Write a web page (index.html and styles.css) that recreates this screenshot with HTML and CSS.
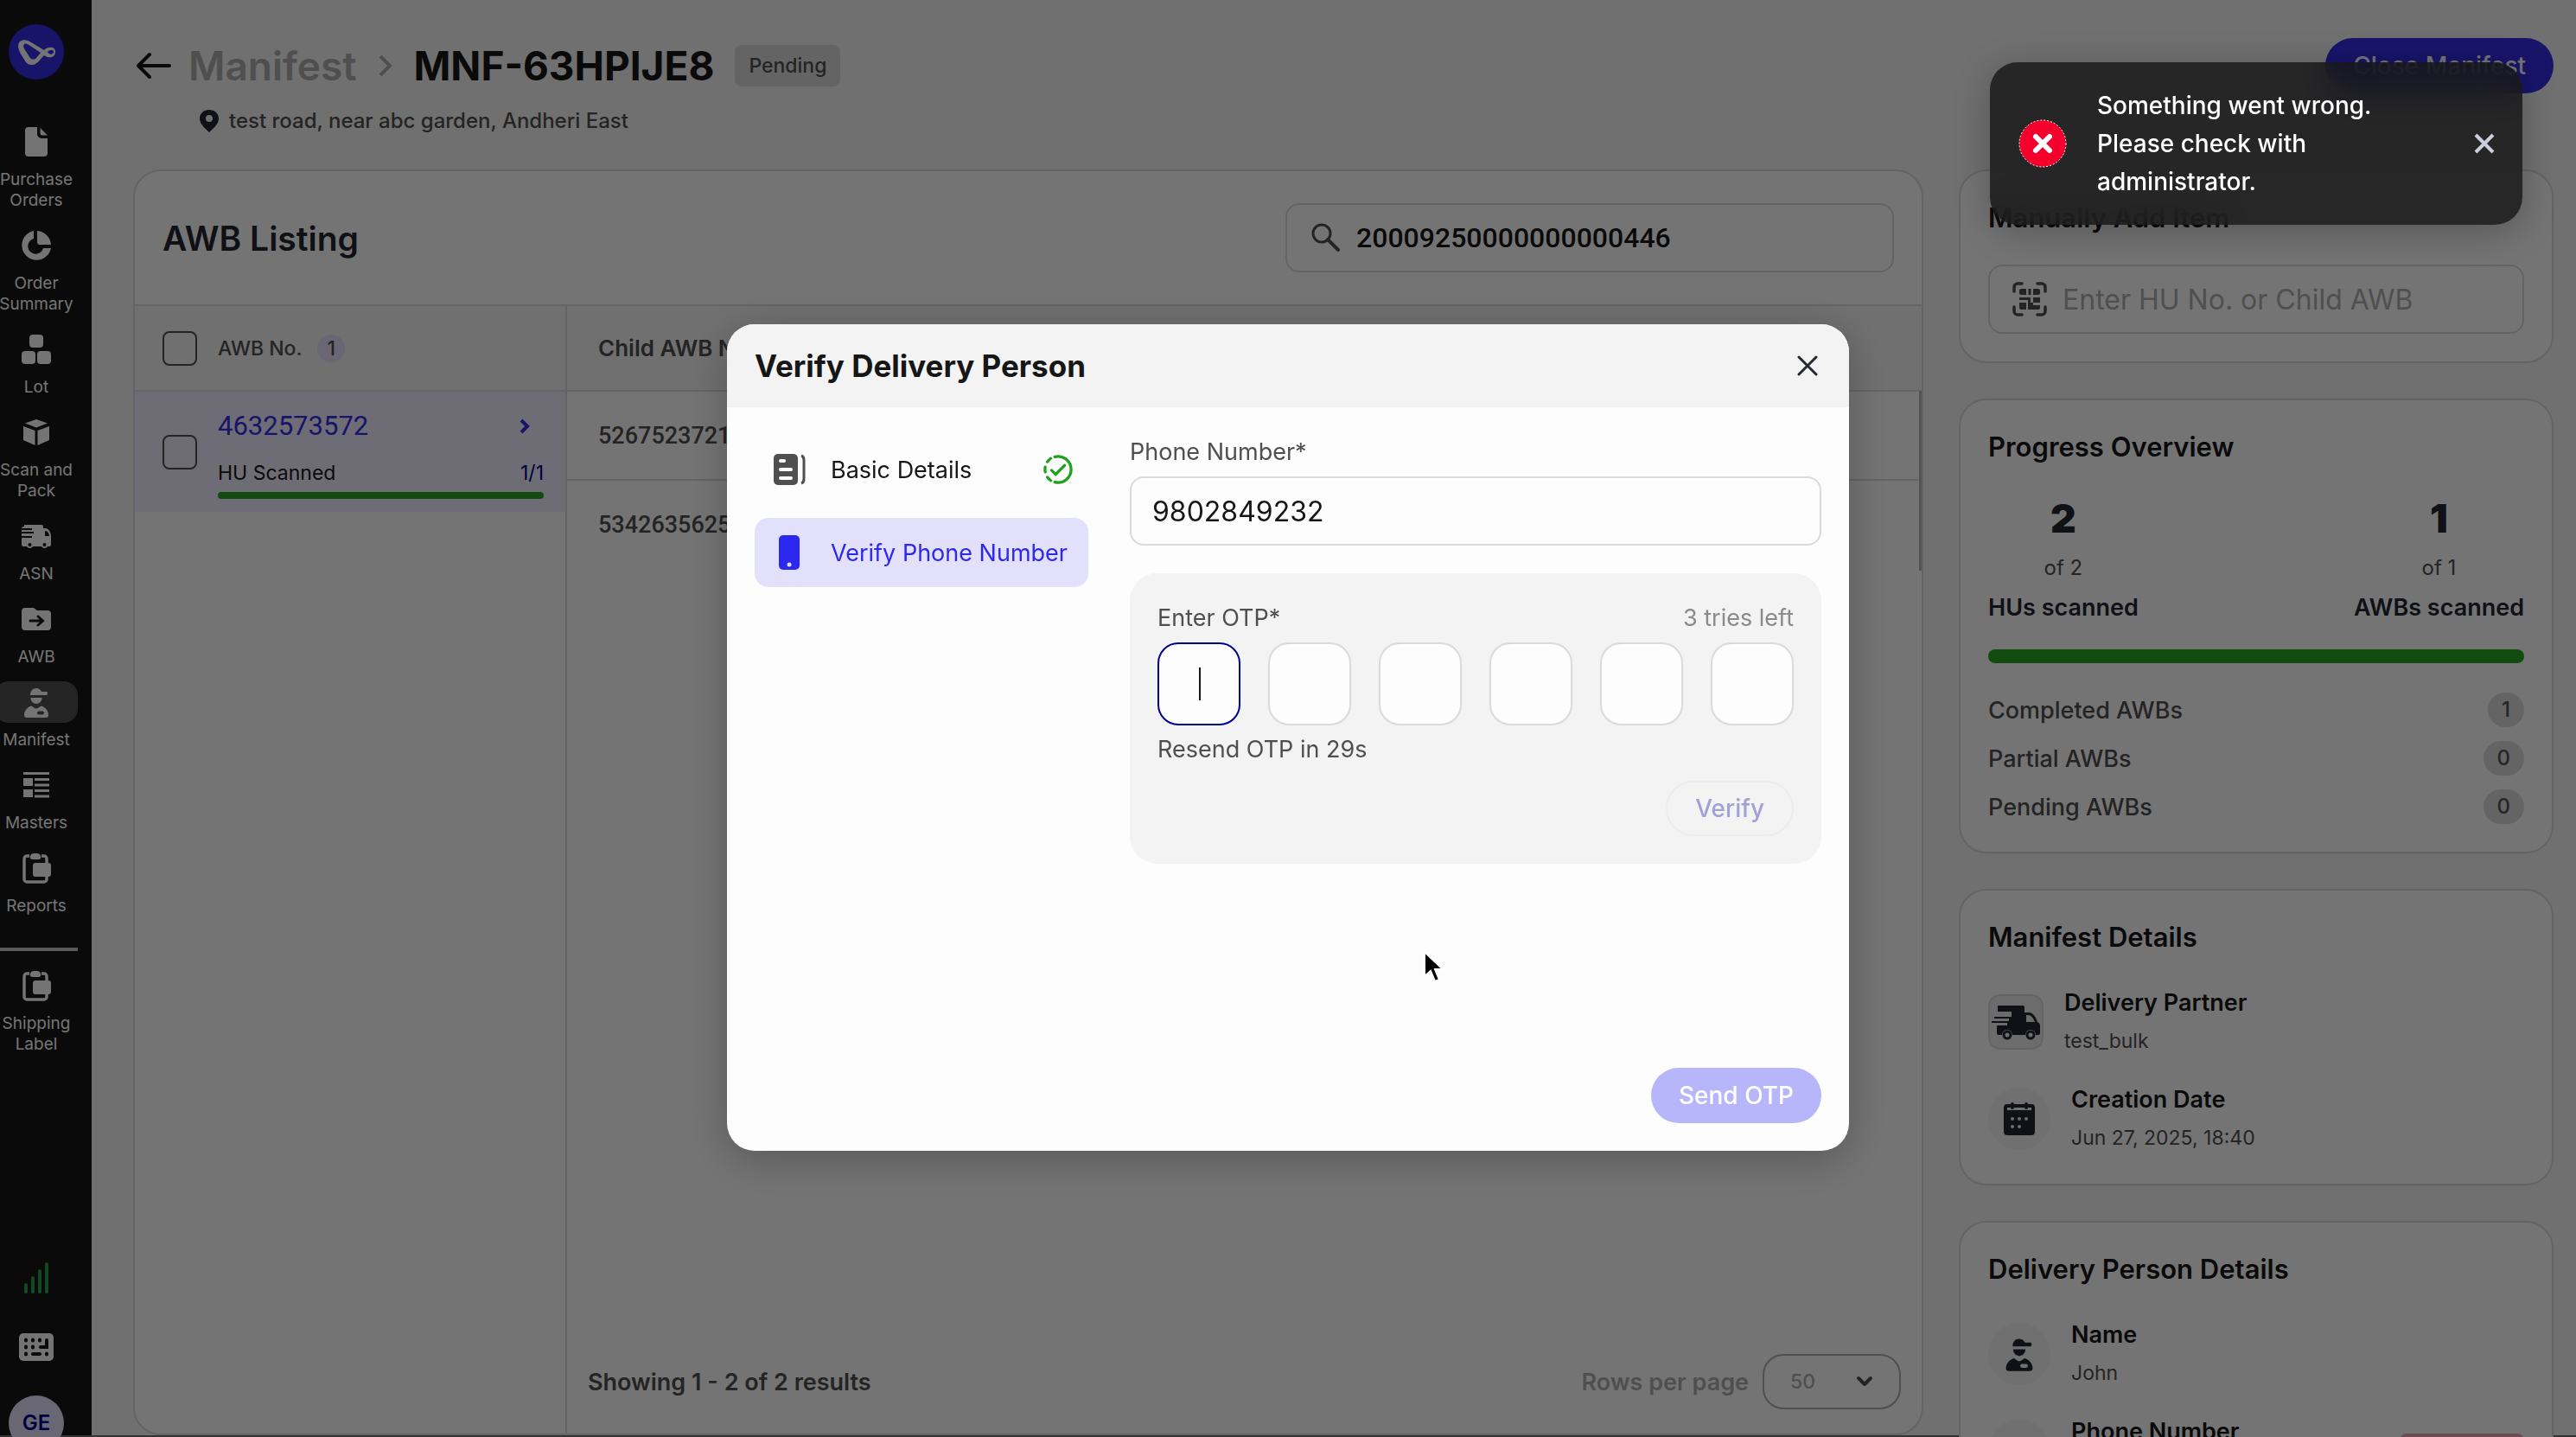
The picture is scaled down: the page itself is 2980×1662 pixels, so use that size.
FILE: index.html
```html
<!DOCTYPE html>
<html lang="en">
<head>
    <meta charset="UTF-8">
    <meta name="viewport" content="width=device-width, initial-scale=1.0">
    <title>Manifest MNF-63HPIJE8</title>
    <link rel="stylesheet" href="styles.css">
</head>
<body>
    <svg class="sprite" width="0" height="0" aria-hidden="true">
        <symbol id="i-rider" viewBox="0 0 40 40">
            <path d="M13 12c0-5 3-8 7-8 3 0 5 2 6 4h6c1.300 0 1.300 4 0 4zM13.500 15h13c0 4-3 7-6.500 7s-6.500-3-6.500-7z"/>
            <path fill-rule="evenodd" d="M14 24.500c2 0 3 3 6 3s4-3 6-3c5 2 8 6 8 10.500 0 2-1 3-3 3H9c-2 0-3-1-3-3 0-4.500 3-8.500 8-10.500zM23 30.500a2 2 0 0 0 0 4h4a2 2 0 0 0 0-4z"/>
        </symbol>
        <symbol id="i-report" viewBox="0 0 40 40">
            <path d="M12 6H9a3 3 0 0 0-3 3v24a3 3 0 0 0 3 3h20a3 3 0 0 0 3-3V9a3 3 0 0 0-3-3h-3" fill="none" stroke="currentColor" stroke-width="3.500"/>
            <path d="M13 6c1-3 3-3 6-3s5 0 6 3-1 4-3 4h-6c-2 0-4-1-3-4zM19 14h15a3 3 0 0 1 3 3v10a3 3 0 0 1-3 3H19a3 3 0 0 1-3-3V17a3 3 0 0 1 3-3z"/>
        </symbol>
    </svg>

    <div class="app">
        <aside class="sidebar">
            <a href="#" class="logo" aria-label="Home">
                <svg viewBox="0 0 64 64"><circle cx="32" cy="32" r="32" fill="#352de6"/><path fill-rule="evenodd" fill="#fdfdfd" d="M13 20c4-3 9-2 13 1l15 9c4-4 13-5 13 2s-8 8-13 4c-5 5-8 11-14 11-7 0-8-5-12-11-3-5-6-12-2-16zm5 3c-3 3 3 9 5 13 2 5 6 6 9 3l5-6-12-8c-3-2-5-3-7-2zm27 9c2 4 7 3 7 0s-4-3-7 0z"/></svg>
            </a>
            <nav class="nav">
                <a href="#" class="nav-item">
                    <span class="nav-icon"><svg viewBox="0 0 40 40"><path d="M11 3h10v8a5 5 0 0 0 5 5h7v17a4 4 0 0 1-4 4H11a4 4 0 0 1-4-4V7a4 4 0 0 1 4-4zM24.500 4l8.500 8.500h-6a2.500 2.500 0 0 1-2.500-2.500z"/></svg></span>
                    <span>Purchase Orders</span>
                </a>
                <a href="#" class="nav-item">
                    <span class="nav-icon"><svg viewBox="0 0 40 40"><path d="M17 3v9a9 9 0 1 0 11 11h9A17 17 0 1 1 17 3zM21 3a17 17 0 0 1 16 16H24a3 3 0 0 1-3-3z"/></svg></span>
                    <span>Order Summary</span>
                </a>
                <a href="#" class="nav-item">
                    <span class="nav-icon"><svg viewBox="0 0 40 40"><rect x="12" y="3" width="16" height="15" rx="4"/><rect x="3" y="22" width="16" height="15" rx="4"/><rect x="21" y="22" width="16" height="15" rx="4"/></svg></span>
                    <span>Lot</span>
                </a>
                <a href="#" class="nav-item">
                    <span class="nav-icon"><svg viewBox="0 0 40 40"><path d="M20 5l13 4.500-13 5L7 9.500zM5 13l13.500 5v17L5 29zM35 13l-13.500 5v17L35 29z"/></svg></span>
                    <span>Scan and Pack</span>
                </a>
                <a href="#" class="nav-item">
                    <span class="nav-icon"><svg viewBox="0 0 40 40"><path fill-rule="evenodd" d="M6 7h20a2 2 0 0 1 2 2v2h3c4 1 6 5 6 10v9a2 2 0 0 1-2 2h-2a4 4 0 0 1-7 0h-10a4 4 0 0 1-7 0H5a2 2 0 0 1-2-2v-8h12v-2H3v-3h14v-2H3v-2h12v-2H3c0-1 1-2 3-2zm24 7v6h5c0-3-2-6-5-6zM12.500 28a2 2 0 1 0 0 4 2 2 0 0 0 0-4zm17 0a2 2 0 1 0 0 4 2 2 0 0 0 0-4z"/></svg></span>
                    <span>ASN</span>
                </a>
                <a href="#" class="nav-item">
                    <span class="nav-icon"><svg viewBox="0 0 40 40"><path d="M7 7h10l4 3h12a4 4 0 0 1 4 4v15a4 4 0 0 1-4 4H7a4 4 0 0 1-4-4V11a4 4 0 0 1 4-4z"/><path d="M13 22h14M22 17l5.500 5-5.500 5" fill="none" stroke="#161616" stroke-width="3" stroke-linecap="round"/></svg></span>
                    <span>AWB</span>
                </a>
                <a href="#" class="nav-item active">
                    <span class="nav-icon"><svg><use href="#i-rider"/></svg></span>
                    <span>Manifest</span>
                </a>
                <a href="#" class="nav-item">
                    <span class="nav-icon"><svg viewBox="0 0 40 40"><path d="M5 5h30v3H5zM5 12h11v9H5zM5 25h11v9H5zM18 12h17v3H18zM18 18.500h17v3H18zM18 25h17v3H18zM18 31.500h17v3H18z"/></svg></span>
                    <span>Masters</span>
                </a>
                <a href="#" class="nav-item">
                    <span class="nav-icon"><svg><use href="#i-report"/></svg></span>
                    <span>Reports</span>
                </a>
                <hr class="nav-divider">
                <a href="#" class="nav-item">
                    <span class="nav-icon"><svg><use href="#i-report"/></svg></span>
                    <span>Shipping Label</span>
                </a>
            </nav>
            <div class="sidebar-foot">
                <svg class="signal" viewBox="0 0 28 36"><path d="M2 26v8M10 18v16M18 10v24M26 2v32" stroke="#2a9d50" stroke-width="4" stroke-linecap="round"/></svg>
                <svg class="keyboard" viewBox="0 0 40 32"><rect width="40" height="32" rx="5"/><path d="M8 7.500v1M16 7.500v1M24 7.500v1M8 15.500v1M16 15.500v1M8 23.500v1M32 23.500v1M32 8v8h-7M16 24h8" fill="none" stroke="#161616" stroke-width="4" stroke-linecap="round"/></svg>
                <span class="avatar">GE</span>
            </div>
        </aside>

        <main class="page">
            <header class="page-head">
                <div>
                    <div class="crumbs">
                        <a href="#" class="back" aria-label="Back"><svg viewBox="0 0 40 32"><path d="M38 16H3M15 3L2 16l13 13" fill="none" stroke="#161616" stroke-width="4" stroke-linecap="round" stroke-linejoin="round"/></svg></a>
                        <a href="#" class="crumb">Manifest</a>
                        <svg class="crumb-sep" viewBox="0 0 18 28"><path d="M3 3l11 11L3 25" fill="none" stroke="#adadad" stroke-width="4"/></svg>
                        <h1>MNF-63HPIJE8</h1>
                        <span class="status">Pending</span>
                    </div>
                    <p class="address">
                        <svg viewBox="0 0 22 26"><path fill-rule="evenodd" d="M11 0c6 0 11 4 11 10 0 7-7 12-11 16C7 22 0 17 0 10 0 4 5 0 11 0zm0 6a4 4 0 1 0 0 8 4 4 0 0 0 0-8z"/></svg>
                        test road, near abc garden, Andheri East
                    </p>
                </div>
                <button type="button" class="btn btn-primary">Close Manifest</button>
            </header>

            <div class="columns">
                <section class="card listing">
                    <div class="listing-head">
                        <h2>AWB Listing</h2>
                        <label class="field search">
                            <svg viewBox="0 0 36 36"><circle cx="14" cy="13" r="10" fill="none" stroke="#4f4f4f" stroke-width="3"/><path d="M21 20l12 12" stroke="#4f4f4f" stroke-width="4" stroke-linecap="round"/></svg>
                            <input type="text" aria-label="Search AWB" value="20009250000000000446">
                        </label>
                    </div>
                    <div class="listing-body">
                        <table class="awb-table">
                            <thead>
                                <tr>
                                    <th class="check-cell"><input type="checkbox" aria-label="Select all"></th>
                                    <th>AWB No. <span class="count">1</span></th>
                                </tr>
                            </thead>
                            <tbody>
                                <tr>
                                    <td class="check-cell"><input type="checkbox" aria-label="Select 4632573572"></td>
                                    <td>
                                        <a href="#" class="awb-link">4632573572
                                            <svg viewBox="0 0 12 18"><path d="M2 2l7 7-7 7" fill="none" stroke="#352de6" stroke-width="4"/></svg>
                                        </a>
                                        <div class="awb-scan"><span>HU Scanned</span><span class="ratio">1/1</span></div>
                                        <div class="bar bar-thin"></div>
                                    </td>
                                </tr>
                            </tbody>
                        </table>
                        <div class="children">
                            <table class="child-table">
                                <thead><tr><th>Child AWB No.</th></tr></thead>
                                <tbody>
                                    <tr><td>5267523721</td></tr>
                                    <tr><td>5342635625</td></tr>
                                </tbody>
                            </table>
                            <span class="scroll-thumb"></span>
                            <footer class="pager">
                                <span>Showing 1 - 2 of 2 results</span>
                                <label class="rows" for="rows">Rows per page
                                    <span class="select-wrap">
                                        <select id="rows"><option>50</option></select>
                                        <svg viewBox="0 0 20 14"><path d="M3 3l7 7 7-7" fill="none" stroke="#4f4f4f" stroke-width="4" stroke-linecap="round" stroke-linejoin="round"/></svg>
                                    </span>
                                </label>
                            </footer>
                        </div>
                    </div>
                </section>

                <div class="side">
                    <section class="card side-card">
                        <h3>Manually Add Item</h3>
                        <label class="field">
                            <svg class="scan" viewBox="0 0 40 40"><path d="M2 11V6a4 4 0 0 1 4-4h5M29 2h5a4 4 0 0 1 4 4v5M38 29v5a4 4 0 0 1-4 4h-5M11 38H6a4 4 0 0 1-4-4v-5" fill="none" stroke="#4f4f4f" stroke-width="3.500" stroke-linecap="round"/><path d="M10 8h6v7h-6a2 2 0 0 1-2-2v-3a2 2 0 0 1 2-2zM18.500 8h3v7h-3zM24 8h6a2 2 0 0 1 2 2v3a2 2 0 0 1-2 2h-6zM8 18h13v6h3v3h8v3a2 2 0 0 1-2 2H18v-11H8zM24 18h8v6h-8zM8 24h8v8h-6a2 2 0 0 1-2-2z" fill="#4f4f4f"/></svg>
                            <input type="text" aria-label="HU No. or Child AWB" placeholder="Enter HU No. or Child AWB">
                        </label>
                    </section>

                    <section class="card side-card">
                        <h3>Progress Overview</h3>
                        <div class="stats">
                            <div class="stat"><strong>2</strong><small>of 2</small><span>HUs scanned</span></div>
                            <div class="stat"><strong>1</strong><small>of 1</small><span>AWBs scanned</span></div>
                        </div>
                        <div class="bar"></div>
                        <ul class="totals">
                            <li>Completed AWBs <span class="pill">1</span></li>
                            <li>Partial AWBs <span class="pill">0</span></li>
                            <li>Pending AWBs <span class="pill">0</span></li>
                        </ul>
                    </section>

                    <section class="card side-card">
                        <h3>Manifest Details</h3>
                        <div class="details">
                            <div class="detail">
                                <span class="thumb"><svg viewBox="0 0 56 42"><path fill-rule="evenodd" d="M7 2h29a2 2 0 0 1 2 2v6h5c5 0 8 5 10 11 2 1 3 2 3 4v9a2 2 0 0 1-2 2h-3a6 6 0 0 0-12 0H24a6 6 0 0 0-12 0H8a2 2 0 0 1-2-2v-9h12v-3H0v-2h20v-3H3v-2h20V9H7zm33 11v8h10c-2-5-4-8-8-8z"/><circle cx="18" cy="36" r="4" fill="none" stroke="#232730" stroke-width="3"/><circle cx="45" cy="36" r="4" fill="none" stroke="#232730" stroke-width="3"/></svg></span>
                                <div><h4>Delivery Partner</h4><p>test_bulk</p></div>
                            </div>
                            <div class="detail">
                                <span class="thumb round"><svg viewBox="0 0 36 38"><path fill-rule="evenodd" d="M4 2h4a2 2 0 0 1 4 0h12a2 2 0 0 1 4 0h4a4 4 0 0 1 4 4v28a4 4 0 0 1-4 4H4a4 4 0 0 1-4-4V6a4 4 0 0 1 4-4zm0 4v3h28V6h-4a2 2 0 0 1-4 0H12a2 2 0 0 1-4 0z"/><path d="M10 19v.100M18 19v.100M26 19v.100M10 28v.100M18 28v.100" stroke="#eee" stroke-width="4" stroke-linecap="round"/></svg></span>
                                <div><h4>Creation Date</h4><p>Jun 27, 2025, 18:40</p></div>
                            </div>
                        </div>
                    </section>

                    <section class="card side-card">
                        <h3>Delivery Person Details</h3>
                        <div class="details">
                            <div class="detail">
                                <span class="thumb round"><svg class="person"><use href="#i-rider"/></svg></span>
                                <div><h4>Name</h4><p>John</p></div>
                            </div>
                            <div class="detail">
                                <span class="thumb round"></span>
                                <div><h4>Phone Number</h4></div>
                                <span class="unverified"></span>
                            </div>
                        </div>
                    </section>
                </div>
            </div>
        </main>
    </div>

    <div class="overlay">
        <form class="modal" role="dialog" aria-labelledby="modalTitle">
            <header class="modal-head">
                <h2 id="modalTitle">Verify Delivery Person</h2>
                <button type="button" class="icon-btn" aria-label="Close"><svg viewBox="0 0 24 24"><path d="M2 2l20 20M22 2L2 22" stroke="#232730" stroke-width="3" stroke-linecap="round"/></svg></button>
            </header>
            <div class="modal-body">
                <nav class="steps">
                    <a href="#" class="step">
                        <svg viewBox="0 0 40 40"><rect x="2" y="2" width="28" height="36" rx="5" fill="#4f4f4f"/><path d="M34 4c3 1 3 3 3 6v20c0 3 0 5-3 6" fill="none" stroke="#4f4f4f" stroke-width="3"/><path d="M10 10h4M10 20h12M10 30h12" stroke="#fdfdfd" stroke-width="4" stroke-linecap="round"/></svg>
                        Basic Details
                        <svg class="done" viewBox="0 0 36 36"><path d="M14 2.500a16 16 0 1 1 0 31M9 31.500a16 16 0 0 1-4-4M2.300 21a16 16 0 0 1 0-6M5 8.500a16 16 0 0 1 4-4M10 19l5 5 11-11" fill="none" stroke="#1fa31c" stroke-width="3.500" stroke-linecap="round"/></svg>
                    </a>
                    <a href="#" class="step current">
                        <svg viewBox="0 0 40 40"><rect x="8" width="24" height="40" rx="5" fill="#2c28f0"/><circle cx="20" cy="34" r="2.500" fill="#e2e0fa"/></svg>
                        Verify Phone Number
                    </a>
                </nav>
                <div class="form">
                    <label class="form-label" for="phone">Phone Number*</label>
                    <input type="tel" class="phone" id="phone" value="9802849232">
                    <div class="otp">
                        <div class="otp-head"><label class="form-label" for="otp1">Enter OTP*</label><span class="tries">3 tries left</span></div>
                        <div class="otp-row">
                            <span class="digit focus"><input type="text" id="otp1" maxlength="1"><i class="caret"></i></span>
                            <span class="digit"><input type="text" aria-label="Digit 2" maxlength="1"></span>
                            <span class="digit"><input type="text" aria-label="Digit 3" maxlength="1"></span>
                            <span class="digit"><input type="text" aria-label="Digit 4" maxlength="1"></span>
                            <span class="digit"><input type="text" aria-label="Digit 5" maxlength="1"></span>
                            <span class="digit"><input type="text" aria-label="Digit 6" maxlength="1"></span>
                        </div>
                        <p class="form-label">Resend OTP in 29s</p>
                        <button type="button" class="btn btn-verify" disabled>Verify</button>
                    </div>
                    <button type="submit" class="btn btn-send" disabled>Send OTP</button>
                </div>
            </div>
        </form>
    </div>

    <div class="toast" role="alert">
        <svg class="toast-icon" viewBox="0 0 56 56"><circle cx="28" cy="28" r="27" fill="#f5002d" stroke="#fff" stroke-width="1" stroke-dasharray="2 2"/><path d="M20 20l16 16M36 20L20 36" stroke="#fff" stroke-width="6" stroke-linecap="round"/></svg>
        <p>Something went wrong. Please check with administrator.</p>
        <button type="button" class="icon-btn" aria-label="Dismiss"><svg viewBox="0 0 24 24"><path d="M2 2l20 20M22 2L2 22" stroke="#c9cfdc" stroke-width="4"/></svg></button>
    </div>

    <svg class="cursor" viewBox="0 0 24 38"><path d="M2 2v28l7-6 5 12 5-2-5-12h9z" fill="#000" stroke="#fff" stroke-width="2"/></svg>
</body>
</html>
```
FILE: styles.css
```css
* {
    box-sizing: border-box;
}

body {
    font-family: Inter, "Liberation Sans", sans-serif;
    font-size: 24px;
    color: #161616;
    background: #f3f3f3;
    margin: 0;
    height: 100vh;
    overflow: hidden;
}

h1, h2, h3, h4, p, ul {
    margin: 0;
    padding: 0;
}

a {
    color: inherit;
    text-decoration: none;
}

input, select, button {
    font: inherit;
    color: inherit;
}

.sprite {
    position: absolute;
}

.app {
    display: flex;
    height: 100vh;
    border-bottom: 2px solid #6f6f6f;
}

/* sidebar */
.sidebar {
    width: 106px;
    flex-shrink: 0;
    background: #161616;
    color: #fdfdfd;
    padding-top: 28px;
    padding-right: 16px;
    display: flex;
    flex-direction: column;
}

.sidebar svg {
    fill: currentColor;
}

.logo {
    margin-left: 10px;
    height: 64px;
}

.logo svg {
    width: 64px;
    height: 64px;
}

.nav {
    margin: 48px 0 0 -6px;
    display: flex;
    flex-direction: column;
    gap: 16px;
}

.nav-item {
    display: flex;
    flex-direction: column;
    gap: 8px;
    text-align: center;
    font-size: 19px;
    line-height: 24px;
}

.nav-icon {
    height: 48px;
    border-radius: 16px;
    display: flex;
    align-items: center;
    justify-content: center;
}

.nav-icon svg {
    width: 40px;
    height: 40px;
}

.active .nav-icon {
    background: #525252;
}

.nav-divider {
    width: 100%;
    height: 4px;
    border: 0;
    background: #c4c4c4;
    margin: 20px 0 0;
}

.sidebar-foot {
    margin-top: auto;
    margin-bottom: -18px;
    margin-left: -6px;
    display: flex;
    flex-direction: column;
    align-items: center;
}

.signal {
    width: 28px;
    height: 36px;
}

.keyboard {
    width: 40px;
    height: 32px;
    margin: 46px 0 40px;
}

.avatar {
    width: 64px;
    height: 64px;
    border-radius: 50%;
    background: #e2e0fa;
    color: #00008f;
    font-weight: 600;
    line-height: 64px;
    text-align: center;
}

/* page header */
.page {
    flex: 1;
    min-width: 0;
    padding: 44px 26px 0 48px;
    display: flex;
    flex-direction: column;
}

.page-head {
    display: flex;
    justify-content: space-between;
    align-items: flex-start;
    height: 152px;
}

.crumbs {
    display: flex;
    align-items: center;
    height: 64px;
    font-size: 46px;
    font-weight: 600;
}

.back {
    display: flex;
    margin: 0 20px 0 4px;
}

.back svg {
    width: 40px;
    height: 32px;
}

.crumb {
    color: #adadad;
}

.crumb-sep {
    width: 18px;
    height: 28px;
    margin: 0 24px;
}

.crumbs h1 {
    font-size: 46px;
    font-weight: 700;
}

.status {
    margin-left: 24px;
    padding: 0 16px;
    line-height: 48px;
    border-radius: 8px;
    background: #dadada;
    color: #4f4f4f;
    font-size: 23px;
    font-weight: 500;
}

.address {
    display: flex;
    align-items: center;
    gap: 12px;
    margin: 16px 0 0 77px;
    line-height: 32px;
    color: #4f4f4f;
    font-size: 24px;
    font-weight: 500;
}

.address svg {
    width: 22px;
    height: 26px;
    fill: #232730;
}

.btn {
    height: 64px;
    padding: 0 32px;
    border: 0;
    border-radius: 32px;
    font-size: 28px;
    font-weight: 500;
}

.btn-primary {
    background: #352de6;
    color: #fdfdfd;
}

/* listing */
.columns {
    flex: 1;
    min-height: 0;
    display: flex;
    gap: 41px;
}

.card {
    background: #fdfdfd;
    border: 2px solid #dadada;
    border-radius: 32px;
}

.listing {
    flex: 1;
    display: flex;
    flex-direction: column;
    overflow: hidden;
}

.listing-head {
    display: flex;
    justify-content: space-between;
    align-items: center;
    height: 156px;
    padding: 0 32px;
    border-bottom: 2px solid #dadada;
}

.listing-head h2 {
    font-size: 39px;
    font-weight: 600;
    color: #232730;
}

.field {
    display: flex;
    align-items: center;
    height: 80px;
    padding: 0 26px;
    border: 2px solid #dadada;
    border-radius: 16px;
}

.field svg {
    width: 36px;
    height: 36px;
    flex-shrink: 0;
    margin-right: 18px;
}

.field input {
    flex: 1;
    min-width: 0;
    padding: 0;
    border: 0;
    outline: 0;
    background: none;
    font-size: 32px;
}

.field input::placeholder {
    color: #adadad;
    opacity: 1;
}

.search {
    width: 704px;
}

.search input {
    font-family: Roboto, sans-serif;
    font-weight: 500;
}

.field .scan {
    width: 40px;
    height: 40px;
}

.listing-body {
    flex: 1;
    display: flex;
    min-height: 0;
}

table {
    border-collapse: collapse;
    text-align: left;
}

th {
    height: 98px;
    padding: 0;
    background: #f3f3f3;
    border-bottom: 2px solid #dadada;
    color: #4f4f4f;
    font-weight: 500;
}

td {
    padding: 0;
}

.awb-table {
    width: 498px;
    align-self: flex-start;
}

.awb-table th {
    font-size: 23px;
}

.awb-table tbody tr {
    height: 140px;
    background: #efecff;
}

.awb-table td:last-child {
    padding-right: 25px;
}

.check-cell {
    width: 96px;
    padding-left: 32px;
}

input[type="checkbox"] {
    appearance: none;
    display: block;
    width: 40px;
    height: 40px;
    margin: 0;
    border: 2px solid #4f4f4f;
    border-radius: 8px;
}

.count {
    display: inline-block;
    width: 32px;
    margin-left: 12px;
    border-radius: 50%;
    line-height: 32px;
    text-align: center;
    background: #e2e0fa;
}

.awb-link {
    display: flex;
    align-items: center;
    justify-content: space-between;
    padding-right: 16px;
    line-height: 48px;
    font-family: Roboto, sans-serif;
    font-size: 31px;
    color: #352de6;
}

.awb-link svg {
    width: 12px;
    height: 18px;
}

.awb-scan {
    display: flex;
    justify-content: space-between;
    margin: 14px 0 6px;
    line-height: 32px;
    font-size: 23px;
}

.ratio {
    color: #00008f;
}

.bar {
    height: 16px;
    border-radius: 8px;
    background: #29a322;
}

.bar-thin {
    height: 8px;
}

.children {
    position: relative;
    flex: 1;
    display: flex;
    flex-direction: column;
    border-left: 2px solid #dadada;
}

.child-table {
    width: 100%;
    color: #4f4f4f;
    font-size: 27px;
    font-weight: 500;
}

.child-table th,
.child-table td {
    padding-left: 36px;
}

.child-table th {
    font-size: 26px;
    font-weight: 600;
}

.child-table td {
    height: 103px;
    font-family: Roboto, sans-serif;
    border-bottom: 2px solid #dadada;
}

.child-table tr:last-child td {
    border-bottom: 0;
}

.scroll-thumb {
    position: absolute;
    top: 98px;
    right: 0;
    width: 3px;
    height: 208px;
    background: #b5b5b5;
}

.pager {
    display: flex;
    align-items: center;
    justify-content: space-between;
    margin-top: auto;
    padding: 0 24px 28px;
    font-size: 27px;
    font-weight: 600;
    color: #4f4f4f;
}

.rows {
    display: flex;
    align-items: center;
    gap: 16px;
    color: #adadad;
}

.select-wrap {
    position: relative;
}

.select-wrap select {
    appearance: none;
    display: block;
    width: 160px;
    height: 64px;
    padding: 0 30px;
    border: 2px solid #adadad;
    border-radius: 24px;
    background: none;
    font-size: 23px;
    font-weight: 500;
}

.select-wrap svg {
    position: absolute;
    right: 32px;
    top: 25px;
    width: 20px;
    height: 14px;
}

/* right column */
.side {
    width: 688px;
    display: flex;
    flex-direction: column;
    gap: 41px;
}

.side-card {
    flex-shrink: 0;
    padding: 32px;
}

.side-card h3 {
    line-height: 44px;
    margin-bottom: 28px;
    font-size: 31px;
    font-weight: 600;
}

.side-card .field {
    margin-top: 32px;
}

.stats {
    display: flex;
    justify-content: space-between;
    margin-bottom: 28px;
    color: #232730;
}

.stat {
    display: flex;
    flex-direction: column;
    align-items: center;
    font-size: 27px;
    font-weight: 600;
    line-height: 40px;
}

.stat strong {
    font-size: 46px;
    line-height: 64px;
}

.stat small {
    margin: 4px 0;
    font-size: 24px;
    font-weight: 400;
    line-height: 44px;
    color: #4f4f4f;
}

.totals {
    display: flex;
    flex-direction: column;
    gap: 16px;
    margin: 34px 0 0;
    list-style: none;
    color: #4f4f4f;
    font-size: 27px;
    font-weight: 500;
}

.totals li {
    display: flex;
    align-items: center;
    justify-content: space-between;
}

.pill {
    padding: 0 16px;
    border-radius: 20px;
    background: #dadada;
    font-size: 24px;
    line-height: 40px;
}

.details {
    display: flex;
    flex-direction: column;
    gap: 32px;
    padding: 8px 0 3px;
}

.detail {
    display: flex;
    align-items: center;
    gap: 24px;
    min-height: 80px;
}

.detail div {
    align-self: flex-start;
}

.detail h4 {
    font-size: 27px;
    font-weight: 600;
    line-height: 36px;
    margin-bottom: 8px;
}

.detail p {
    color: #4f4f4f;
    font-size: 23px;
    line-height: 36px;
}

.thumb {
    width: 64px;
    height: 64px;
    border: 2px solid #dadada;
    border-radius: 14px;
    background: #ebebeb;
    display: flex;
    align-items: center;
    justify-content: center;
    fill: #232730;
}

.thumb svg {
    width: 56px;
    height: 42px;
}

.round {
    width: 72px;
    height: 72px;
    border: 0;
    border-radius: 50%;
    background: #f3f3f3;
}

.round svg {
    width: 36px;
    height: 38px;
}

.round .person {
    width: 44px;
    height: 44px;
}

.unverified {
    width: 144px;
    height: 40px;
    margin-left: auto;
    border-radius: 8px;
    background: #eaa9b4;
}

/* verify dialog */
.overlay {
    position: fixed;
    inset: 0;
    display: flex;
    align-items: center;
    justify-content: center;
    padding-top: 44px;
    background: rgba(0, 0, 0, 0.54);
}

.modal {
    display: flex;
    flex-direction: column;
    width: 1298px;
    max-width: 90vw;
    min-height: 956px;
    border-radius: 32px;
    overflow: hidden;
    background: #fdfdfd;
    box-shadow: 0 10px 50px rgba(0, 0, 0, 0.25);
}

.modal-head {
    display: flex;
    align-items: center;
    justify-content: space-between;
    height: 96px;
    padding: 0 32px;
    background: #f3f3f3;
}

.modal-head h2 {
    font-size: 35px;
    font-weight: 700;
}

.icon-btn {
    display: flex;
    padding: 4px;
    border: 0;
    background: none;
}

.icon-btn svg {
    width: 24px;
    height: 24px;
}

.modal-body {
    flex: 1;
    display: flex;
    gap: 48px;
    padding: 32px;
}

.steps {
    display: flex;
    flex-direction: column;
    gap: 16px;
    width: 386px;
}

.step {
    display: flex;
    align-items: center;
    gap: 28px;
    height: 80px;
    padding: 0 18px 0 20px;
    border-radius: 16px;
    font-size: 27px;
    white-space: nowrap;
}

.step svg {
    width: 40px;
    height: 40px;
    flex-shrink: 0;
}

.step .done {
    width: 34px;
    height: 34px;
    margin-left: auto;
}

.current {
    background: #e2e0fa;
    color: #2c28f0;
}

.form {
    flex: 1;
    display: flex;
    flex-direction: column;
}

.form-label {
    color: #4f4f4f;
    font-size: 27px;
    line-height: 40px;
}

.phone {
    height: 80px;
    margin: 8px 0 32px;
    padding: 0 24px;
    border: 2px solid #dadada;
    border-radius: 16px;
    background: none;
    font-size: 32px;
}

.otp {
    display: flex;
    flex-direction: column;
    padding: 32px;
    border-radius: 32px;
    background: #f3f3f3;
}

.otp-head {
    display: flex;
    justify-content: space-between;
    margin-bottom: 8px;
}

.tries {
    color: #8a8a8a;
    font-size: 27px;
    line-height: 40px;
}

.otp-row {
    display: flex;
    justify-content: space-between;
    margin-bottom: 8px;
}

.digit {
    position: relative;
    width: 96px;
    height: 96px;
}

.digit input {
    display: block;
    width: 100%;
    height: 100%;
    padding: 0;
    border: 2px solid #dadada;
    border-radius: 24px;
    background: #fdfdfd;
    text-align: center;
}

.focus input {
    border-color: #00008f;
}

.caret {
    position: absolute;
    left: 48px;
    top: 29px;
    width: 2px;
    height: 38px;
    background: #161616;
}

.btn-verify {
    align-self: flex-end;
    margin-top: 16px;
    border: 2px solid #ececec;
    background: none;
    color: #a5a0d4;
}

.btn-send {
    align-self: flex-end;
    margin-top: auto;
    background: #b7b6fb;
    color: #fff;
}

/* toast */
.toast {
    position: fixed;
    top: 72px;
    right: 62px;
    width: 616px;
    display: flex;
    align-items: center;
    padding: 28px 28px 28px 33px;
    border-radius: 32px;
    background: rgba(20, 20, 20, 0.8);
    backdrop-filter: blur(20px);
    box-shadow: 0 8px 40px rgba(0, 0, 0, 0.25);
    color: #fff;
    font-size: 28px;
    font-weight: 500;
    line-height: 44px;
}

.toast p {
    flex: 1;
    margin-left: 35px;
    padding-right: 90px;
}

.toast-icon {
    width: 56px;
    height: 56px;
}

.cursor {
    position: fixed;
    left: 1646px;
    top: 1099px;
    width: 24px;
    height: 38px;
}
```
